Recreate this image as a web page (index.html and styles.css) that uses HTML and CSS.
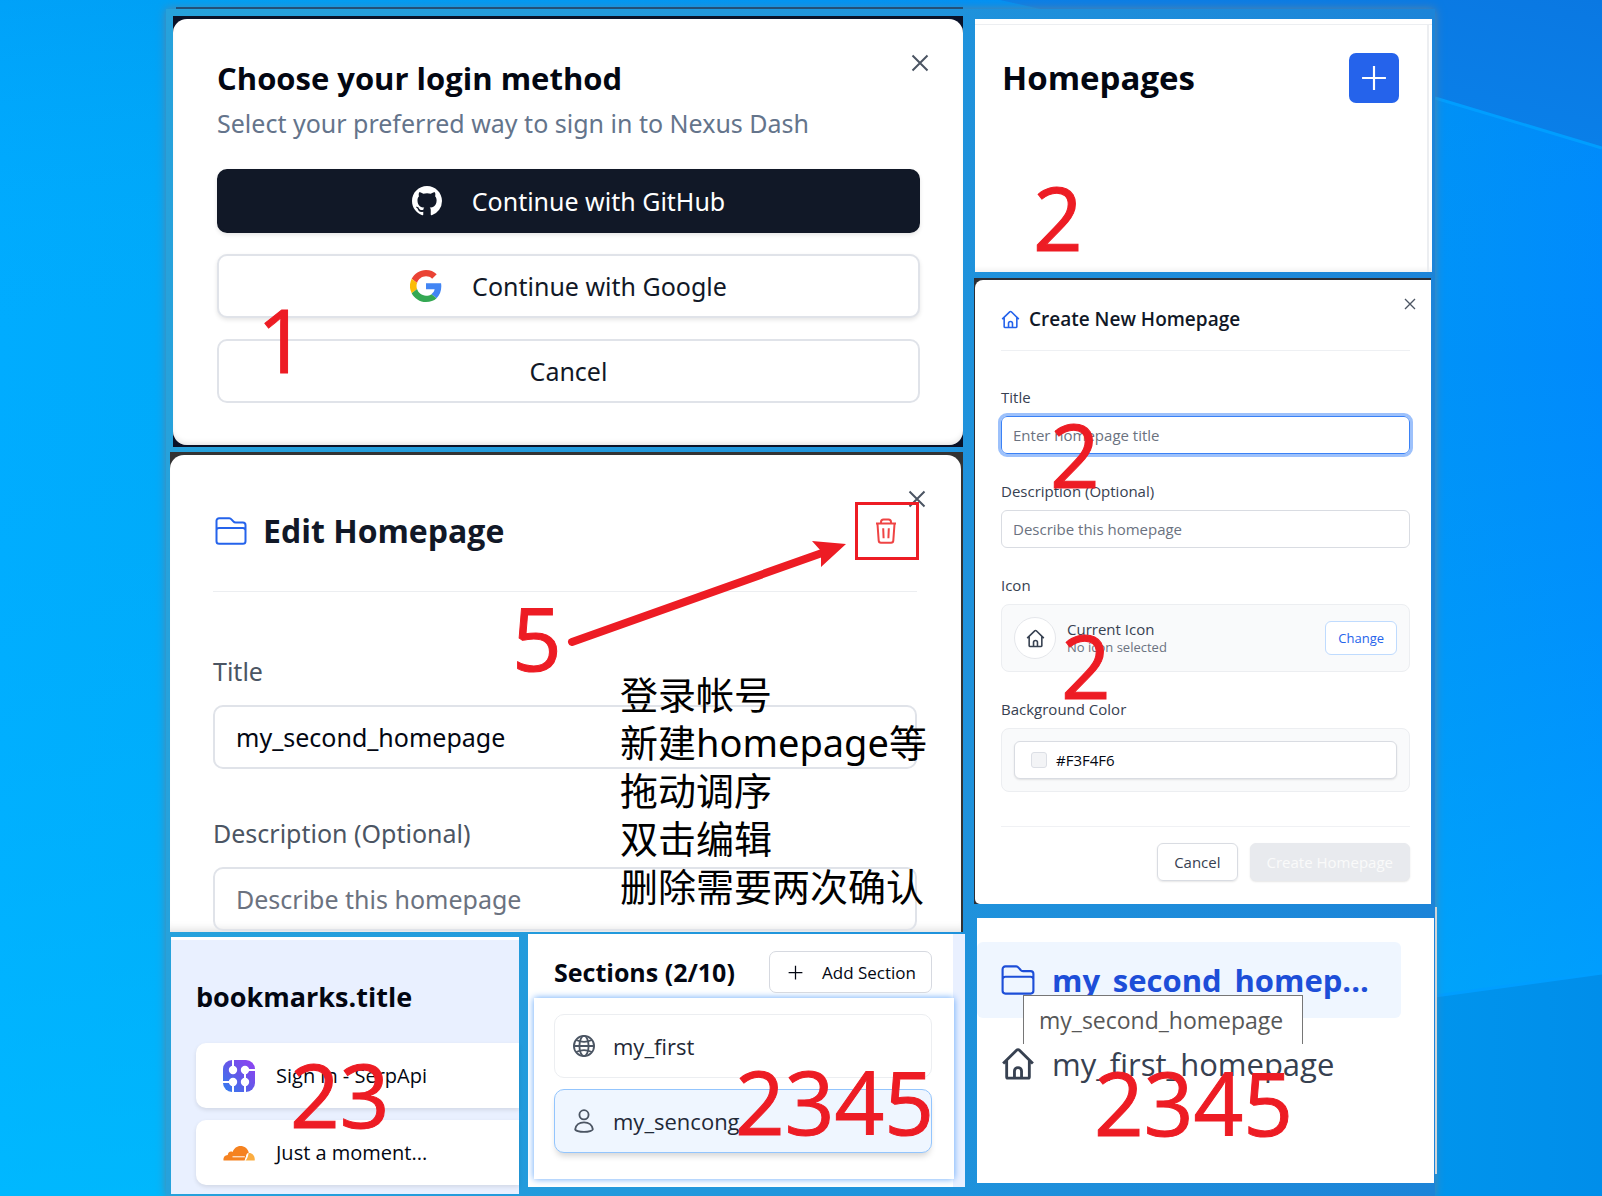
FILE: index.html
```html
<!DOCTYPE html>
<html lang="zh-CN">
<head>
<meta charset="utf-8">
<meta name="viewport" content="width=device-width, initial-scale=1">
<title>Nexus Dash</title>
<link rel="stylesheet" href="styles.css">
</head>
<body>
<svg class="wallpaper" viewBox="0 0 1602 1196" preserveAspectRatio="none" aria-hidden="true">
  <defs>
    <linearGradient id="sky" x1="0" y1="0" x2="1" y2="0">
      <stop offset="0" stop-color="#00acff"/><stop offset=".1" stop-color="#00aafa"/><stop offset=".6" stop-color="#0098fa"/><stop offset=".9" stop-color="#0092f8"/><stop offset="1" stop-color="#008afc"/>
    </linearGradient>
    <linearGradient id="low" x1="0" y1="0" x2="0" y2="1">
      <stop offset="0" stop-color="#0078e0" stop-opacity=".2"/><stop offset=".3" stop-color="#00b0ff" stop-opacity="0"/><stop offset="1" stop-color="#00c4ff" stop-opacity=".5"/>
    </linearGradient>
    <linearGradient id="shade" x1="0" y1="1" x2="1" y2="0">
      <stop offset="0" stop-color="#0a86ee"/><stop offset="1" stop-color="#0a78e2"/>
    </linearGradient>
    <linearGradient id="floor" x1="0" y1="0" x2="1" y2="0">
      <stop offset="0" stop-color="#00a4f4"/><stop offset="1" stop-color="#008eea"/>
    </linearGradient>
  </defs>
  <rect width="1602" height="1196" fill="url(#sky)"/>
  <rect width="1602" height="1196" fill="url(#low)"/>
  <path d="M1000 0H1602V148L1435 98Z" fill="url(#shade)"/>
  <path class="ray" d="M1435 98L1602 148"/>
  <path d="M1000 1030L1435 996L1602 973V1196H1000Z" fill="url(#floor)"/>
  <path class="ray" d="M1435 996L1602 973"/>
</svg>

<svg class="sprite" aria-hidden="true">
  <symbol id="i-home" viewBox="0 0 24 24"><path d="M1.5 11.6 11 2.3a1.4 1.4 0 0 1 2 0l9.500 9.300M4 9.500V21.200a.8.8 0 0 0 .8.8h14.400a.8.8 0 0 0 .8-.8V9.500M9.500 22v-5a2.500 2.500 0 0 1 5 0v5"/></symbol>
  <symbol id="i-folder" viewBox="0 0 32 28"><path d="M1.500 11.500V3.800A2.600 2.600 0 0 1 4.100 1.200h10.200c1.200 0 1.900.8 2.600 1.600l1.400 1.600c.7.9 1.300 1.200 2.400 1.200h7.200a2.600 2.600 0 0 1 2.600 2.600v16a2.600 2.600 0 0 1-2.600 2.600H4.100a2.600 2.600 0 0 1-2.600-2.600zM1.500 13.500a2.600 2.600 0 0 1 2.600-2.600h23.800a2.600 2.600 0 0 1 2.600 2.600"/></symbol>
  <symbol id="i-x" viewBox="0 0 18 18"><path d="M1.500 1.500 16.500 16.500M16.500 1.500 1.500 16.500"/></symbol>
  <symbol id="i-plus" viewBox="0 0 24 24"><path d="M12 1v22M1 12h22"/></symbol>
</svg>

<main class="board">
  <div class="column">
    <section class="shot shot-login">
      <div class="sheet login">
        <button class="close" type="button" aria-label="Close login"><svg><use href="#i-x"/></svg></button>
        <h1>Choose your login method</h1>
        <p>Select your preferred way to sign in to Nexus Dash</p>
        <div class="choices">
          <button class="choice choice-dark" type="button">
            <svg viewBox="0 0 16 16"><path fill="#fff" d="M8 0C3.580 0 0 3.580 0 8c0 3.540 2.290 6.530 5.470 7.590.4.070.55-.17.55-.38 0-.19-.01-.82-.01-1.490-2.010.37-2.530-.49-2.690-.94-.09-.23-.48-.94-.82-1.130-.28-.15-.68-.52-.01-.53.63-.01 1.080.58 1.230.82.72 1.210 1.870.87 2.330.66.07-.52.28-.87.51-1.070-1.780-.2-3.640-.89-3.640-3.950 0-.87.31-1.590.82-2.150-.08-.2-.36-1.020.08-2.120 0 0 .67-.21 2.200.82.64-.18 1.320-.27 2-.27s1.360.09 2 .27c1.530-1.040 2.200-.82 2.200-.82.44 1.100.16 1.920.08 2.120.51.56.82 1.270.82 2.150 0 3.070-1.870 3.750-3.650 3.950.29.25.54.73.54 1.480 0 1.070-.01 1.930-.01 2.200 0 .21.15.46.55.38A8.010 8.010 0 0 0 16 8c0-4.420-3.580-8-8-8z"/></svg>
            Continue with GitHub
          </button>
          <button class="choice" type="button">
            <svg viewBox="0 0 48 48"><path fill="#ea4335" d="M24 9.500c3.540 0 6.710 1.220 9.210 3.600l6.850-6.850C35.900 2.380 30.470 0 24 0 14.620 0 6.510 5.380 2.560 13.220l7.980 6.190C12.430 13.720 17.740 9.500 24 9.500z"/><path fill="#4285f4" d="M46.980 24.550c0-1.570-.15-3.090-.38-4.550H24v9.020h12.940c-.58 2.960-2.260 5.480-4.780 7.180l7.730 6c4.510-4.180 7.090-10.360 7.090-17.650z"/><path fill="#fbbc05" d="M10.530 28.590a14.500 14.500 0 0 1 0-9.180l-7.980-6.190a24 24 0 0 0 0 21.560z"/><path fill="#34a853" d="M24 48c6.480 0 11.930-2.130 15.890-5.810l-7.730-6c-2.150 1.450-4.920 2.300-8.160 2.300-6.260 0-11.570-4.220-13.470-9.910l-7.980 6.190C6.510 42.620 14.620 48 24 48z"/></svg>
            Continue with Google
          </button>
          <button class="choice choice-plain" type="button">Cancel</button>
        </div>
      </div>
      <span class="mark mark-login">1</span>
    </section>

    <section class="shot shot-edit">
      <form class="sheet edit">
        <button class="close" type="button" aria-label="Close editor"><svg><use href="#i-x"/></svg></button>
        <header>
          <svg class="folder"><use href="#i-folder"/></svg>
          <h2>Edit Homepage</h2>
          <button class="delete" type="button" aria-label="Delete homepage">
            <svg viewBox="0 0 22 26"><path d="M1 5.500h20M6 5.500V4a2.500 2.500 0 0 1 2.500-2.500h5A2.500 2.500 0 0 1 16 4v1.500M2.500 6l1.200 16.600A2.200 2.200 0 0 0 5.900 24.700h10.200a2.200 2.200 0 0 0 2.200-2.100L19.500 6M8.200 10.200l.4 10M13.800 10.200l-.4 10"/></svg>
          </button>
        </header>
        <label for="edit-title">Title</label>
        <input id="edit-title" type="text" value="my_second_homepage">
        <label for="edit-desc">Description (Optional)</label>
        <input id="edit-desc" type="text" placeholder="Describe this homepage">
      </form>
      <svg class="arrow" viewBox="0 0 300 120" aria-hidden="true"><path class="shaft" d="M12 110 262 21"/><path d="M286 12 252 9 261 19 261 35Z" fill="#ed1c24"/></svg>
      <span class="mark mark-edit">5</span>
      <p class="notes">登录帐号<br>新建homepage等<br>拖动调序<br>双击编辑<br>删除需要两次确认</p>
    </section>

    <div class="pair">
      <section class="shot bookmarks">
        <h2>bookmarks.title</h2>
        <a class="bookmark" href="#serpapi">
          <svg viewBox="0 0 32 32"><defs><linearGradient id="serp" x1="0" y1="1" x2="1" y2="0"><stop offset="0" stop-color="#2f80f0"/><stop offset=".5" stop-color="#6358e8"/><stop offset="1" stop-color="#9440f4"/></linearGradient></defs><rect width="32" height="32" rx="9" fill="url(#serp)"/><g class="circuit"><path d="M10 0V9M22 10H32M0 22H10M10 22V32M22 10V32"/><circle cx="10" cy="10" r="3.200"/><circle cx="22" cy="10" r="3.200"/><circle cx="10" cy="22" r="3.200"/><circle cx="22" cy="22" r="3.200"/></g></svg>
          Sign in - SerpApi
        </a>
        <a class="bookmark" href="#moment">
          <svg viewBox="0 0 32 32"><path fill="#f58220" d="M.5 23.500c-.4-3 1.300-5.300 4.300-5.400-.1-2.800 2.600-4.500 4.900-3.200C11 11.200 14 9 17.300 9c4.200 0 7.600 2.700 8.500 6.700l-1.800.9-2.200 6.900z"/><path fill="#fbad41" d="M25.600 16c3.900-.2 6.700 3.200 6.100 7.500h-9.400c1.700-.8 2.700-3.700 3.300-7.500z"/><path class="shine" d="M9.500 19.800h12.300M22 23.500c1-2 1.600-3.800 2-6"/></svg>
          Just a moment...
        </a>
        <span class="mark mark-bookmarks">23</span>
      </section>

      <section class="shot sections">
        <header>
          <h2>Sections (2/10)</h2>
          <button type="button"><svg><use href="#i-plus"/></svg>Add Section</button>
        </header>
        <nav aria-label="Sections">
          <a href="#my_first"><svg viewBox="0 0 24 24"><circle cx="12" cy="12" r="11"/><ellipse cx="12" cy="12" rx="5" ry="11"/><path d="M1 12h22M3.500 5.500c5 2.400 12 2.400 17 0M3.500 18.500c5-2.400 12-2.400 17 0"/></svg>my_first</a>
          <a class="current" href="#my_sencong" aria-current="true"><svg viewBox="0 0 24 26"><circle cx="12" cy="6.200" r="5"/><path d="M12 14.500c5.300 0 9 3.200 9.600 7.500.2 1.500-4.600 2.900-9.600 2.900s-9.800-1.400-9.600-2.900c.6-4.300 4.300-7.500 9.600-7.500z"/></svg>my_sencong</a>
        </nav>
        <span class="mark mark-sections">2345</span>
      </section>
    </div>
  </div>

  <div class="column column-side">
    <section class="shot homepages">
      <h2>Homepages</h2>
      <button type="button" aria-label="Add homepage"><svg><use href="#i-plus"/></svg></button>
      <span class="mark mark-homepages">2</span>
    </section>

    <section class="shot shot-create">
      <form class="create">
        <button class="close close-small" type="button" aria-label="Close dialog"><svg><use href="#i-x"/></svg></button>
        <header><svg><use href="#i-home"/></svg><h2>Create New Homepage</h2></header>
        <div class="field">
          <label for="new-title">Title</label>
          <input class="focused" id="new-title" type="text" placeholder="Enter homepage title">
        </div>
        <div class="field">
          <label for="new-desc">Description (Optional)</label>
          <input id="new-desc" type="text" placeholder="Describe this homepage">
        </div>
        <div class="field">
          <h3>Icon</h3>
          <div class="well">
            <span class="disc"><svg><use href="#i-home"/></svg></span>
            <p>Current Icon<small>No icon selected</small></p>
            <button class="change" type="button">Change</button>
          </div>
        </div>
        <div class="field">
          <h3>Background Color</h3>
          <div class="well"><button class="swatch" type="button"><i></i>#F3F4F6</button></div>
        </div>
        <footer>
          <button type="button">Cancel</button>
          <button class="submit" type="submit" disabled>Create Homepage</button>
        </footer>
      </form>
      <span class="mark mark-field">2</span>
      <span class="mark mark-icon">2</span>
    </section>

    <section class="shot picker">
      <a class="current" href="#second"><svg class="folder"><use href="#i-folder"/></svg><span>my_second_homep...</span></a>
      <a href="#first"><svg><use href="#i-home"/></svg><span>my_first_homepage</span></a>
      <span class="tip" role="tooltip">my_second_homepage</span>
      <span class="mark mark-picker">2345</span>
    </section>
  </div>
</main>
</body>
</html>
```

FILE: styles.css
```css
* { box-sizing: border-box; }

body {
  margin: 0;
  padding: 9px 167px 0 166px;
  background: #00a0fa;
  color: #030712;
  font-family: "Open Sans", "Noto Sans CJK SC", sans-serif;
}

h1, h2, h3, p { margin: 0; }
button, input { font: inherit; color: inherit; }
button { padding: 0; border: 0; background: none; }
a { color: inherit; text-decoration: none; }
svg { display: block; flex: none; fill: none; stroke: currentColor; }
svg [fill] { stroke: none; }

.wallpaper { position: absolute; inset: 0; width: 100%; height: 100%; z-index: -1; }
.ray { stroke: #009eff; stroke-width: 3; }
.sprite { position: absolute; width: 0; height: 0; }

/* Board: two columns of pinned screens */
.board {
  position: relative;
  display: grid;
  grid-template-columns: minmax(0, 795fr) minmax(0, 460fr);
  gap: 9px;
  padding: 7px 1px 2px 4px;
  background: linear-gradient(90deg, #26a2dc, #1f93dc 60%, #1c84d8);
  box-shadow: 0 0 9px #5c84a0;
}
.board::before {
  content: "";
  position: absolute;
  top: -2px;
  left: 10px;
  width: 62%;
  height: 2px;
  background: #234f78;
}
.column { display: flex; flex-direction: column; gap: 5px; min-width: 0; }
.column-side { gap: 6px; padding-top: 3px; }
.shot { position: relative; }

.mark {
  position: absolute;
  color: #ed1c24;
  font-size: 87px;
  line-height: 88px;
  -webkit-text-stroke: 1px #ed1c24;
  pointer-events: none;
}
.mark-login { left: 84px; top: 279px; }
.mark-edit { left: 342px; top: 141px; }
.mark-bookmarks { left: 119px; top: 110px; }
.mark-sections { left: 207px; top: 123px; }
.mark-homepages { left: 58px; top: 154px; }
.mark-field { left: 76px; top: 132px; }
.mark-icon { left: 87px; top: 343px; }
.mark-picker { left: 117px; top: 140px; }

.close { position: absolute; color: #4b5563; }
.close svg { width: 18px; height: 18px; stroke-width: 2; }
.close-small svg { width: 12px; height: 12px; }

/* Login dialog */
.shot-login { margin: 0 2px 0 3px; padding: 3px 0 2px; background: #0a1228; }
.sheet {
  position: relative;
  border-radius: 14px;
  background: #fff;
  font-family: "Noto Sans", "Noto Sans CJK SC", sans-serif;
}
.sheet h1, .sheet h2 { font-family: "Open Sans", sans-serif; font-weight: 700; }
.login { padding: 40px 43px 42px 44px; box-shadow: inset 0 -4px 6px -3px #ddd; }
.login .close { top: 35px; right: 34px; }
.login h1 { font-size: 31px; line-height: 38px; }
.login p { margin-top: 8px; font-size: 25px; line-height: 36px; color: #64748b; }
.choices { display: flex; flex-direction: column; gap: 21px; margin-top: 28px; }
.choice {
  display: flex;
  align-items: center;
  justify-content: center;
  gap: 30px;
  height: 64px;
  border: 2px solid #e0e3e9;
  border-radius: 10px;
  background: #fff;
  box-shadow: 0 2px 4px #0000001a;
  color: #111827;
  font-size: 25px;
}
.choice svg { width: 32px; height: 32px; }
.choice-dark { border-color: #111827; background: #111827; color: #fff; }
.choice-dark svg { width: 30px; height: 30px; }
.choice-plain { box-shadow: none; }

/* Edit dialog */
.shot-edit { margin-right: 2px; padding: 3px 2px 0 0; background: #333; }
.edit {
  display: flex;
  flex-direction: column;
  padding: 46px 44px 1px 43px;
  border-radius: 14px 14px 0 0;
  box-shadow: inset 0 -10px 10px -8px #ddd;
}
.edit .close { top: 35px; right: 35px; }
.edit header {
  display: flex;
  align-items: center;
  gap: 16px;
  height: 91px;
  margin-bottom: 61px;
  padding: 0 0 31px 2px;
  border-bottom: 1px solid #eceef1;
}
.folder { width: 32px; height: 28px; color: #2563eb; stroke-width: 2; }
.edit h2 { flex: 1; font-size: 32px; line-height: 44px; color: #111827; }
.delete {
  position: relative;
  display: grid;
  place-items: center;
  width: 64px;
  height: 58px;
  margin-right: -2px;
  padding-right: 3px;
  border: 3px solid #ed1c24;
  color: #ef4444;
}
.delete svg { width: 22px; height: 26px; stroke-width: 2; }
.edit label { margin-bottom: 16px; font-size: 25px; line-height: 36px; color: #4b5563; }
.edit input {
  height: 64px;
  padding: 0 21px;
  border: 2px solid #e0e3e9;
  border-radius: 10px;
  background: none;
  font-size: 25px;
}
.edit input + label { margin-top: 46px; }
input::placeholder { color: #6b7280; opacity: 1; }
.arrow { position: absolute; left: 390px; top: 80px; width: 300px; height: 120px; }
.shaft { stroke: #ed1c24; stroke-width: 8; stroke-linecap: round; }
.notes {
  position: absolute;
  left: 450px;
  top: 218px;
  color: #000;
  font-family: "Noto Sans", "Noto Sans CJK SC", sans-serif;
  font-size: 38px;
  line-height: 48px;
  white-space: nowrap;
}

.pair {
  display: grid;
  grid-template-columns: minmax(0, 348fr) minmax(0, 437fr);
  gap: 9px;
  align-items: start;
  margin: -3px 0 0 1px;
}

/* Bookmarks */
.bookmarks {
  display: flex;
  flex-direction: column;
  gap: 12px;
  margin-top: 3px;
  padding: 39px 0 9px 25px;
  border-top: 3px solid #fff;
  background: #e9f0ff;
}
.bookmarks h2 { margin-bottom: 16px; font-size: 27px; line-height: 36px; font-weight: 700; }
.bookmark {
  display: flex;
  align-items: center;
  gap: 21px;
  height: 65px;
  padding-left: 27px;
  border-radius: 10px 0 0 10px;
  background: #fff;
  box-shadow: 0 2px 4px #0000001a;
  font-size: 20px;
}
.bookmark svg { width: 32px; height: 32px; }
.circuit { fill: #fff; stroke: #fff; stroke-width: 2; }
.shine { stroke: #fff; }

/* Sections */
.sections {
  overflow: hidden;
  padding: 17px 11px 8px 6px;
  background: linear-gradient(90deg, #fff 425px, #e9f0ff 425px);
}
.sections header { display: flex; align-items: center; justify-content: space-between; padding: 0 22px 0 20px; }
.sections h2 { font-size: 25px; line-height: 41px; font-weight: 700; }
.sections button {
  display: flex;
  align-items: center;
  gap: 19px;
  height: 42px;
  padding: 0 15px 0 18px;
  border: 1px solid #d6d9e0;
  border-radius: 7px;
  background: #fff;
  font-size: 17px;
}
.sections button svg { width: 15px; height: 15px; stroke-width: 2; }
.sections nav {
  display: flex;
  flex-direction: column;
  gap: 11px;
  margin-top: 5px;
  padding: 16px 22px 26px 20px;
  background: #fff;
  box-shadow: 0 0 7px #60a5fa;
}
.sections a {
  display: flex;
  align-items: center;
  gap: 18px;
  height: 64px;
  padding-left: 18px;
  border: 1px solid #eceef1;
  border-radius: 10px;
  color: #1f2937;
  font-size: 22px;
}
.sections a svg { width: 22px; height: 24px; color: #4b5563; stroke-width: 2; }
.sections .current { border-color: #93c5fd; background: #eff6ff; box-shadow: 0 5px 6px -2px #0000002b; }

/* Homepages */
.homepages {
  display: flex;
  align-items: flex-start;
  justify-content: space-between;
  min-height: 253px;
  margin: 0 2px 0 1px;
  padding: 34px 33px 0 27px;
  background: linear-gradient(#fff 5px, #eceef1 5px 6px, #fff 6px calc(100% - 6px), #f3f3f3);
}
.homepages::before {
  content: "";
  position: absolute;
  top: 5px;
  right: 3px;
  bottom: 0;
  width: 2px;
  background: #eceef1;
}
.homepages h2 { font-size: 33px; line-height: 50px; font-weight: 700; }
.homepages button {
  display: grid;
  place-items: center;
  width: 50px;
  height: 50px;
  border-radius: 7px;
  background: #2563eb;
  color: #fff;
}
.homepages button svg { width: 26px; height: 26px; stroke-width: 2; }

/* Create dialog */
.shot-create { margin-right: 3px; padding: 2px 0 0 1px; background: #2b2e35; }
.create {
  position: relative;
  display: flex;
  flex-direction: column;
  gap: 27px;
  padding: 25px 21px 23px 26px;
  border-radius: 8px 0 0 5px;
  background: #fff;
  color: #374151;
  font-size: 15px;
  line-height: 20px;
}
.create .close { top: 18px; right: 15px; }
.create header {
  display: flex;
  align-items: center;
  gap: 9px;
  margin-bottom: 9px;
  padding-bottom: 17px;
  border-bottom: 1px solid #eef0f3;
}
.create header svg { width: 19px; height: 19px; color: #2563eb; stroke-width: 2; }
.create h2 { font-size: 19px; line-height: 28px; font-weight: 600; color: #111827; }
.field { display: flex; flex-direction: column; gap: 9px; }
.field h3 { font-size: 15px; font-weight: 400; }
.create input {
  height: 38px;
  padding: 0 11px;
  border: 1px solid #d9dce2;
  border-radius: 6px;
}
.create .focused { border-color: #3b82f6; outline: 3px solid #9dc1fb; }
.well {
  display: flex;
  align-items: center;
  gap: 11px;
  padding: 12px;
  border: 1px solid #eceef1;
  border-radius: 8px;
  background: #f9fafb;
}
.disc {
  display: grid;
  place-items: center;
  width: 42px;
  height: 42px;
  border: 1px solid #e5e7eb;
  border-radius: 50%;
  background: #fff;
}
.disc svg { width: 19px; height: 19px; stroke-width: 2; }
.well p { flex: 1; line-height: 18px; }
.well small { display: block; font-size: 13px; color: #6b7280; }
.change {
  height: 34px;
  padding: 0 12px;
  border: 1px solid #bfdbfe;
  border-radius: 6px;
  background: #fff;
  color: #2563eb;
  font-size: 13px;
}
.swatch {
  display: flex;
  flex: 1;
  align-items: center;
  gap: 9px;
  height: 38px;
  padding: 0 16px;
  border: 1px solid #d9dce2;
  border-radius: 6px;
  background: #fff;
  box-shadow: 0 1px 2px #0000001a;
  color: #030712;
}
.swatch i { width: 16px; height: 16px; border: 1px solid #dcdfe5; border-radius: 3px; background: #f3f4f6; }
.create footer {
  display: flex;
  justify-content: flex-end;
  gap: 12px;
  margin-top: 7px;
  padding-top: 16px;
  border-top: 1px solid #f0f1f4;
}
.create footer button {
  height: 38px;
  padding: 0 16px;
  border: 1px solid #d9dce2;
  border-radius: 6px;
  box-shadow: 0 1px 2px #0000001a;
}
.create footer .submit { border-color: #e8eaee; background: #e8eaee; color: #fafafa; }

/* Homepage picker */
.picker {
  display: flex;
  flex-direction: column;
  gap: 8px;
  min-height: 265px;
  margin: 8px 0 0 3px;
  padding: 24px 33px 0 0;
  background: #fff;
}
.picker::after {
  content: "";
  position: absolute;
  top: -11px;
  right: -3px;
  bottom: 9px;
  width: 2px;
  background: #d0d4d8;
}
.picker a {
  display: flex;
  align-items: center;
  gap: 17px;
  height: 76px;
  padding-left: 24px;
  border-radius: 6px;
  color: #374151;
  font-size: 31px;
}
.picker svg { width: 34px; height: 34px; stroke-width: 2; }
.picker .current { background: #eff6ff; color: #1d4ed8; font-weight: 700; }
.picker .folder { height: 30px; color: #1d4ed8; }
.tip {
  position: absolute;
  left: 46px;
  top: 77px;
  padding: 0 19px 0 15px;
  border: solid #767676;
  border-width: 1px 1px 0;
  background: #fff;
  color: #575757;
  font-size: 23px;
  line-height: 48px;
}
```
